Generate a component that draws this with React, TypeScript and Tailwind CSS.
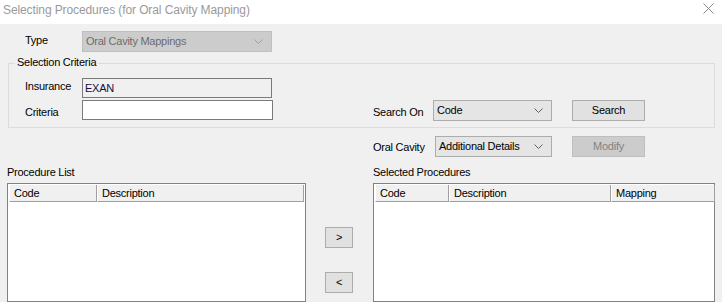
import React from "react";

const Chevron = ({ color = "#606060" }: { color?: string }) => (
  <svg width="9" height="5" viewBox="0 0 9 5" className="shrink-0">
    <polyline points="0.5,0.5 4.5,4.5 8.5,0.5" fill="none" stroke={color} strokeWidth="1" />
  </svg>
);

const Combo = ({
  text,
  w,
  disabled = false,
}: {
  text: string;
  w: string;
  disabled?: boolean;
}) => (
  <div
    className={`${w} h-[21px] flex items-center justify-between pl-[3px] pr-[8px] border ${
      disabled ? "bg-[#cccccc] border-[#bfbfbf] text-[#6d6d6d]" : "bg-[#e5e5e5] border-[#acacac] text-black"
    }`}
  >
    <span>{text}</span>
    <Chevron color={disabled ? "#a0a0a0" : "#606060"} />
  </div>
);

const Btn = ({ text, w, disabled = false }: { text: string; w: string; disabled?: boolean }) => (
  <div
    className={`${w} h-[21px] flex items-center justify-center border ${
      disabled ? "bg-[#cccccc] border-[#bfbfbf] text-[#838383]" : "bg-[#e1e1e1] border-[#adadad] text-black"
    }`}
  >
    {text}
  </div>
);

const HeaderCell = ({ text, w }: { text: string; w: string }) => (
  <div className={`${w} h-[17px] shrink-0 flex items-center pl-[4px] bg-[#f0f0f0] border-l border-l-white border-r border-r-[#a0a0a0] border-b border-b-[#a0a0a0]`}>
    {text}
  </div>
);

export default function App() {
  return (
    <div
      className="w-[722px] h-[302px] overflow-hidden flex flex-col text-[11px] leading-[13px] text-black"
      style={{ fontFamily: '"Liberation Sans", Arial, sans-serif' }}
    >
      {/* Title bar */}
      <div className="h-[24px] bg-white flex items-start justify-between shrink-0">
        <div className="pl-[3px] pt-[3px] text-[12px] leading-[14px] tracking-[-0.1px] text-[#9a9a9a]">
          Selecting Procedures (for Oral Cavity Mapping)
        </div>
        <svg width="11" height="11" viewBox="0 0 11 11" className="mt-[3px] mr-[8px]">
          <line x1="0.5" y1="0.5" x2="10.5" y2="10.5" stroke="#8a8a8a" strokeWidth="1" />
          <line x1="10.5" y1="0.5" x2="0.5" y2="10.5" stroke="#8a8a8a" strokeWidth="1" />
        </svg>
      </div>

      {/* Body */}
      <div className="flex-1 bg-[#f0f0f0] flex flex-col tracking-[-0.25px]">
        {/* Type row */}
        <div className="flex mt-[7px] ml-[25px] h-[21px] items-start">
          <div className="w-[57px] pt-[3px]">Type</div>
          <Combo text="Oral Cavity Mappings" w="w-[190px]" disabled />
        </div>

        {/* Selection Criteria group */}
        <div className="relative ml-[8px] w-[707px] h-[65px] mt-[11px] border border-[#dcdcdc] shrink-0">
          <span className="absolute left-[6px] top-[-8px] px-[2px] bg-[#f0f0f0]">Selection Criteria</span>
          <div className="pl-[16px] pt-[14px] flex flex-col">
            <div className="flex h-[20px] items-start">
              <div className="w-[57px] pt-[2px]">Insurance</div>
              <div className="w-[190px] h-[20px] border border-[#7a7a7a] bg-[#f0f0f0] pl-[2px] pt-[3px] text-[#101040]">
                EXAN
              </div>
            </div>
            <div className="flex mt-[2px] h-[21px] items-start">
              <div className="w-[57px] pt-[6px]">Criteria</div>
              <div className="w-[191px] h-[20px] border border-[#7a7a7a] bg-white" />
              <div className="ml-[100px] w-[60px] pt-[6px]">Search On</div>
              <Combo text="Code" w="w-[119px]" />
              <div className="ml-[20px]">
                <Btn text="Search" w="w-[73px]" />
              </div>
            </div>
          </div>
        </div>

        {/* Oral Cavity row */}
        <div className="flex ml-[373px] mt-[8px] h-[21px] items-start">
          <div className="w-[62px] pt-[5px]">Oral Cavity</div>
          <Combo text="Additional Details" w="w-[117px]" />
          <div className="ml-[20px]">
            <Btn text="Modify" w="w-[73px]" disabled />
          </div>
        </div>

        {/* Lists */}
        <div className="flex mt-[7px] flex-1">
          <div className="ml-[7px] w-[299px] flex flex-col">
            <div className="h-[19px] pt-[2px]">Procedure List</div>
            <div className="flex-1 border border-[#828282] bg-white p-[1px]">
              <div className="flex">
                <HeaderCell text="Code" w="w-[88px]" />
                <HeaderCell text="Description" w="w-[207px]" />
              </div>
            </div>
          </div>
          <div className="w-[67px] flex flex-col items-start pl-[19px]">
            <div className="mt-[63px]">
              <Btn text=">" w="w-[28px]" />
            </div>
            <div className="mt-[24px]">
              <Btn text="<" w="w-[28px]" />
            </div>
          </div>
          <div className="w-[342px] flex flex-col">
            <div className="h-[19px] pt-[2px]">Selected Procedures</div>
            <div className="flex-1 border border-[#828282] bg-white p-[1px]">
              <div className="flex">
                <HeaderCell text="Code" w="w-[74px]" />
                <HeaderCell text="Description" w="w-[162px]" />
                <HeaderCell text="Mapping" w="w-[104px]" />
              </div>
            </div>
          </div>
        </div>
      </div>
    </div>
  );
}
